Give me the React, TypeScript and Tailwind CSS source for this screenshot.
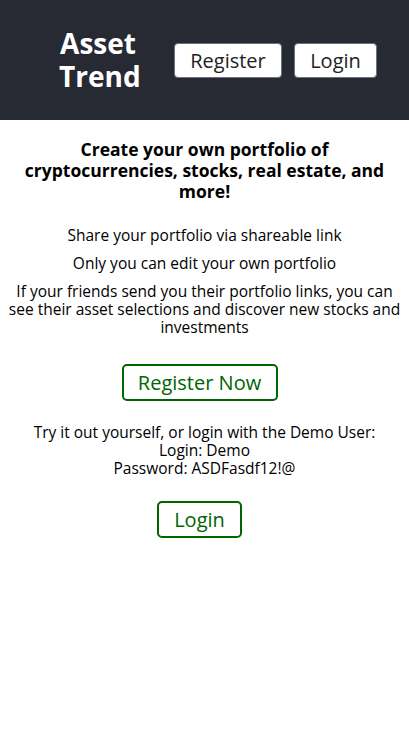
export default function App() {
  const demoText =
    "Try it out yourself, or login with the Demo User:\nLogin: Demo\nPassword: ASDFasdf12!@";

  return (
    <div className="min-h-[734px] bg-white text-black font-['Open_Sans',sans-serif]">
      <header className="bg-[#282a33] h-[120px] flex items-center pl-[59px]">
        <h1 className="text-white font-bold text-[28px] leading-[33px] text-center w-[78px]">
          Asset Trend
        </h1>
        <nav className="flex gap-[12px] ml-[37px]">
          <button className="bg-white text-[#222] text-[20px] leading-[33px] w-[108px] rounded-[4px] border border-gray-500">
            Register
          </button>
          <button className="bg-white text-[#222] text-[20px] leading-[33px] w-[83px] rounded-[4px] border border-gray-500">
            Login
          </button>
        </nav>
      </header>
      <main className="flex flex-col items-center text-center px-[6px]">
        <h2 className="mt-[19px] font-bold text-[17.5px] leading-[21px]">
          Create your own portfolio of cryptocurrencies, stocks, real estate, and more!
        </h2>
        <p className="mt-[24px] text-[15.5px] leading-[18px]">Share your portfolio via shareable link</p>
        <p className="mt-[10px] text-[15.5px] leading-[18px]">Only you can edit your own portfolio</p>
        <p className="mt-[10px] text-[15.5px] leading-[18px]">
          If your friends send you their portfolio links, you can see their asset selections and
          discover new stocks and investments
        </p>
        <button className="mt-[28px] mr-[10px] w-[156px] h-[37px] border-2 border-[#006400] rounded-[5px] text-[#006400] text-[20px]">
          Register Now
        </button>
        <p className="mt-[22px] text-[15.5px] leading-[18px] whitespace-pre-line">{demoText}</p>
        <button className="mt-[24px] mr-[10px] w-[85px] h-[37px] border-2 border-[#006400] rounded-[5px] text-[#006400] text-[20px]">
          Login
        </button>
      </main>
    </div>
  );
}
